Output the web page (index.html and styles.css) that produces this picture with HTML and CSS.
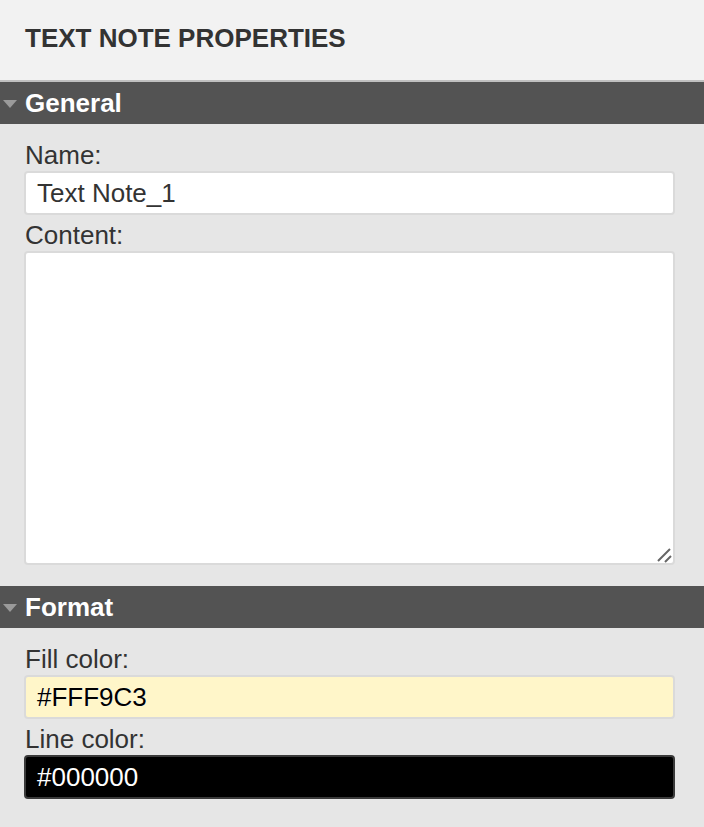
FILE: index.html
```html
<!DOCTYPE html>
<html>
<head>
<meta charset="utf-8">
<link rel="stylesheet" href="styles.css">
</head>
<body>
<div class="panel">
  <div class="header"><h1 class="title">TEXT NOTE PROPERTIES</h1></div>
  <div class="section-bar"><span class="caret"></span><span class="section-title">General</span></div>
  <div class="section-body section-general">
    <div class="field">
      <label class="label">Name:</label>
      <div class="input">Text Note_1</div>
    </div>
    <div class="field">
      <label class="label">Content:</label>
      <div class="textarea-wrap">
        <textarea class="textarea"></textarea>
        <svg class="grip" width="16" height="16" viewBox="0 0 16 16"><path d="M2 14 L14 2 M9 15 L15 9" stroke="#666" stroke-width="2" fill="none"/></svg>
      </div>
    </div>
  </div>
  <div class="section-bar"><span class="caret"></span><span class="section-title">Format</span></div>
  <div class="section-body">
    <div class="field">
      <label class="label">Fill color:</label>
      <div class="input input-fill">#FFF9C3</div>
    </div>
    <div class="field">
      <label class="label">Line color:</label>
      <div class="input input-line">#000000</div>
    </div>
  </div>
</div>
</body>
</html>
```
FILE: styles.css
```css
html, body {
  margin: 0;
  padding: 0;
  background: #e6e6e6;
  font-family: "Liberation Sans", Arial, sans-serif;
}
.panel {
  width: 704px;
}
.header {
  background: #f2f2f2;
  box-sizing: border-box;
  padding: 23px 0 0 25px;
  border-bottom: 2px solid #c0c0c0;
  height: 82px;
}
.title {
  margin: 0;
  font-size: 26px;
  line-height: 30px;
  font-weight: bold;
  color: #333;
}
.section-bar {
  background: #535353;
  height: 42px;
  display: flex;
  align-items: center;
  padding-left: 3px;
}
.caret {
  width: 0;
  height: 0;
  border-left: 7px solid transparent;
  border-right: 7px solid transparent;
  border-top: 8px solid #9a9a9a;
  margin-right: 8px;
  margin-top: 2px;
}
.section-title {
  color: #fff;
  font-size: 26px;
  font-weight: bold;
  line-height: 30px;
}
.section-body {
  padding: 16px 29px 16px 24px;
  display: flex;
  flex-direction: column;
  gap: 5px;
}
.section-general {
  padding-bottom: 21px;
}
.field {
  display: flex;
  flex-direction: column;
}
.label {
  font-size: 26px;
  line-height: 30px;
  color: #333;
  padding-left: 1px;
}
.input {
  margin-top: 1px;
  height: 44px;
  box-sizing: border-box;
  border: 2px solid #dadada;
  border-radius: 4px;
  background: #fff;
  font-size: 26px;
  line-height: 40px;
  padding-left: 11px;
  color: #333;
}
.input-fill {
  background: #fff6c9;
  color: #000;
  text-shadow: 0 0 1px #fff;
}
.input-line {
  background: #000;
  border-color: #3a3a3a;
  color: #fff;
  text-shadow: 0 0 1px #000;
}
.textarea-wrap {
  position: relative;
  margin-top: 1px;
  height: 314px;
}
.textarea {
  display: block;
  width: 100%;
  height: 100%;
  box-sizing: border-box;
  border: 2px solid #dadada;
  border-radius: 4px;
  background: #fff;
  resize: none;
  margin: 0;
  font-family: inherit;
}
.grip {
  position: absolute;
  right: 3px;
  bottom: 2px;
}
```
